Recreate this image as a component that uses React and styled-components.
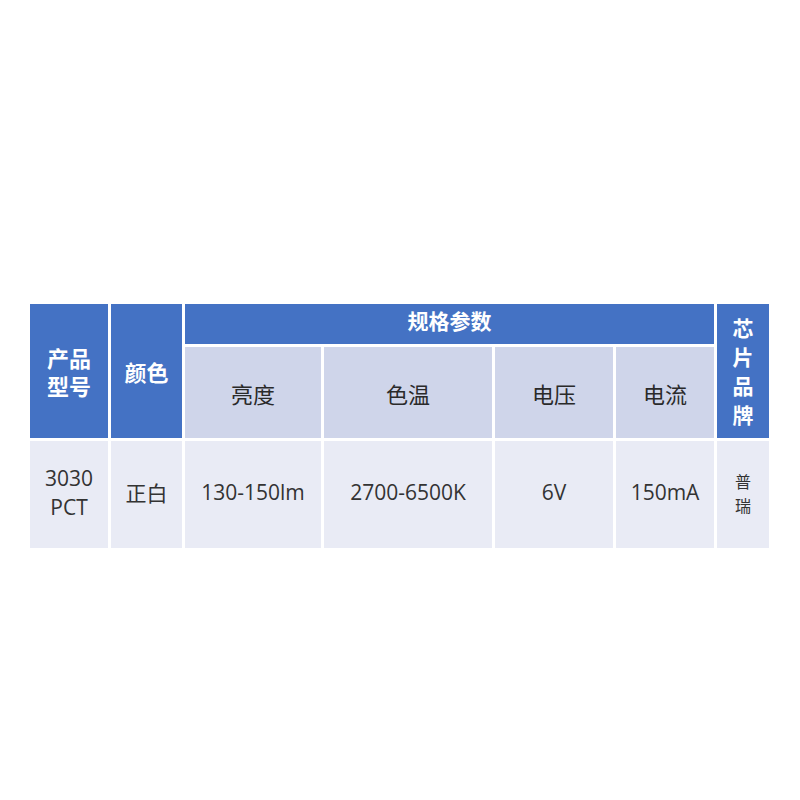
import React from 'react';
import styled, { createGlobalStyle } from 'styled-components';

const GlobalStyle = createGlobalStyle`
  html, body {
    margin: 0;
    padding: 0;
    background: #ffffff;
  }
  body {
    font-family: "Noto Sans CJK SC", "Noto Sans", sans-serif;
  }
`;

const Page = styled.div`
  width: 800px;
  height: 800px;
  padding-top: 304px;
  padding-left: 30px;
  box-sizing: border-box;
`;

const Grid = styled.div`
  display: grid;
  grid-template-columns: 78px 71px 136px 168px 118px 98px 52px;
  grid-template-rows: 40px 91px 107px;
  column-gap: 3px;
  row-gap: 3px;
  width: 739px;
`;

const Cell = styled.div`
  display: flex;
  align-items: center;
  justify-content: center;
  text-align: center;
  box-sizing: border-box;
  grid-column: ${(p) => p.col || 'auto'};
  grid-row: ${(p) => p.row || 'auto'};
`;

const HeadCell = styled(Cell)`
  background: #4472c4;
  color: #ffffff;
  font-weight: 700;
  font-size: ${(p) => p.size || 22}px;
  line-height: ${(p) => p.lh || 28}px;
  padding-bottom: ${(p) => p.pb || 0}px;
`;

const SubCell = styled(Cell)`
  background: #cfd5ea;
  color: #2a2a2a;
  font-size: 22px;
  font-weight: 400;
`;

const BodyCell = styled(Cell)`
  background: #e9ebf5;
  color: #333333;
  font-family: ${(p) => (p.cjk ? '"Noto Sans CJK SC", sans-serif' : '"Open Sans", "Noto Sans CJK SC", sans-serif')};
  font-size: ${(p) => p.size || 21}px;
  line-height: ${(p) => p.lh || 29}px;
  padding-bottom: 4px;
`;

export default function App() {
  return (
    <>
      <GlobalStyle />
      <Page>
        <Grid>
          <HeadCell col="1" row="1 / 3">产品<br />型号</HeadCell>
          <HeadCell col="2" row="1 / 3">颜色</HeadCell>
          <HeadCell col="3 / 7" row="1" size={21} pb={8}>规格参数</HeadCell>
          <HeadCell col="7" row="1 / 3" size={21} lh={29}>芯<br />片<br />品<br />牌</HeadCell>

          <SubCell col="3" row="2">亮度</SubCell>
          <SubCell col="4" row="2">色温</SubCell>
          <SubCell col="5" row="2">电压</SubCell>
          <SubCell col="6" row="2">电流</SubCell>

          <BodyCell col="1" row="3">3030<br />PCT</BodyCell>
          <BodyCell col="2" row="3" cjk size={21}>正白</BodyCell>
          <BodyCell col="3" row="3">130-150lm</BodyCell>
          <BodyCell col="4" row="3">2700-6500K</BodyCell>
          <BodyCell col="5" row="3">6V</BodyCell>
          <BodyCell col="6" row="3">150mA</BodyCell>
          <BodyCell col="7" row="3" cjk size={16} lh={24}>普<br />瑞</BodyCell>
        </Grid>
      </Page>
    </>
  );
}
